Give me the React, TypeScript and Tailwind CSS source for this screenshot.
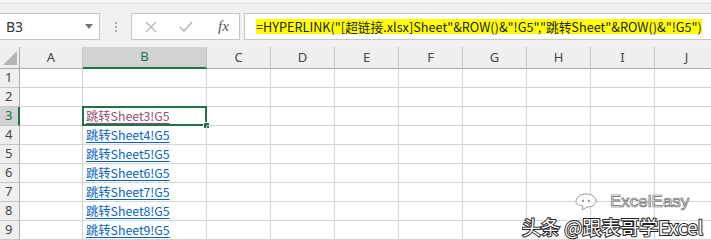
import React from 'react'

const cols = ['A', 'B', 'C', 'D', 'E', 'F', 'G', 'H', 'I', 'J']
const rows = [1, 2, 3, 4, 5, 6, 7, 8, 9]

const cellText = (r: number) => (r >= 3 ? `跳转Sheet${r}!G5` : '')

const App = () => {
  return (
    <div className="relative w-[711px] h-[240px] overflow-hidden bg-white font-['Noto_Sans','Noto_Sans_CJK_SC',sans-serif]">
      {/* formula bar */}
      <div className="h-[47px] bg-[#f1f1f1]">
        <div className="h-[4px] bg-[#f8f8f8] border-b border-[#dcdcdc]" />
        <div className="flex items-center mt-[9px] h-[27px]">
          <div className="w-[100px] h-full bg-white border border-l-0 border-[#c6c6c6] flex items-center justify-between pl-[6px] pr-[6px]">
            <span className="text-[14px] text-[#333]">B3</span>
            <span className="w-0 h-0 border-l-[4px] border-r-[4px] border-t-[5px] border-l-transparent border-r-transparent border-t-[#777]" />
          </div>
          <div className="w-[31px] flex flex-col items-center gap-[2px]">
            <span className="w-[2px] h-[2px] bg-[#aaa]" />
            <span className="w-[2px] h-[2px] bg-[#aaa]" />
            <span className="w-[2px] h-[2px] bg-[#aaa]" />
          </div>
          <div className="w-[109px] h-full bg-white border border-[#c6c6c6] flex items-center">
            <svg width="12" height="12" viewBox="0 0 12 12" className="ml-[13px]">
              <path d="M1 1 L11 11 M11 1 L1 11" stroke="#b4b4b4" strokeWidth="1.3" fill="none" />
            </svg>
            <svg width="14" height="12" viewBox="0 0 14 12" className="ml-[22px]">
              <path d="M1 6 L5 10 L13 1" stroke="#b4b4b4" strokeWidth="1.6" fill="none" />
            </svg>
            <span className="ml-[25px] text-[15px] italic text-[#555] font-['Liberation_Serif',serif]">fx</span>
          </div>
          <div className="ml-[4px] flex-1 h-full bg-white border border-r-0 border-[#c6c6c6] flex items-center pl-[11px]">
            <span className="bg-[#ffff00] text-[12.7px] leading-[15px] text-[#222] whitespace-nowrap font-['Noto_Sans_CJK_SC',sans-serif]">
              =HYPERLINK("[超链接.xlsx]Sheet"&amp;ROW()&amp;"!G5","跳转Sheet"&amp;ROW()&amp;"!G5")
            </span>
          </div>
        </div>
      </div>

      {/* sheet */}
      <div className="grid grid-cols-[20px_63px_124px_repeat(8,64px)] grid-rows-[22px_repeat(9,19px)]">
        <div className="bg-[#efefef] border-r border-b border-[#ababab] relative">
          <svg width="14" height="14" viewBox="0 0 14 14" className="absolute right-[2px] bottom-[3px]">
            <path d="M14 0 L14 14 L0 14 Z" fill="#b5b5b5" />
          </svg>
        </div>
        {cols.map((c) => (
          <div
            key={c}
            className={
              c === 'B'
                ? 'bg-[#d2d2d2] border-r border-[#c0c0c0] border-b-2 border-b-[#217346] flex items-center justify-center text-[13px] text-[#217346]'
                : 'bg-[#efefef] border-r border-[#c6c6c6] border-b border-b-[#ababab] flex items-center justify-center text-[13px] text-[#444]'
            }
          >
            {c}
          </div>
        ))}
        {rows.map((r) => (
          <React.Fragment key={r}>
            <div
              className={
                r === 3
                  ? 'bg-[#d2d2d2] border-r-2 border-r-[#217346] border-b border-b-[#c6c6c6] flex items-center pl-[5px] text-[13px] text-[#217346]'
                  : 'bg-[#efefef] border-r border-r-[#ababab] border-b border-b-[#c6c6c6] flex items-center pl-[5px] text-[13px] text-[#444]'
              }
            >
              {r}
            </div>
            {cols.map((c) => (
              <div key={c} className="relative border-r border-b border-[#d4d4d4] flex items-center">
                {c === 'B' && cellText(r) && (
                  <span
                    className={
                      r === 3
                        ? 'pl-[3px] text-[12.3px] leading-[16px] underline underline-offset-2 text-[#954f72] whitespace-nowrap font-["Noto_Sans_CJK_SC",sans-serif]'
                        : 'pl-[3px] text-[12.3px] leading-[16px] underline underline-offset-2 text-[#0563c1] whitespace-nowrap font-["Noto_Sans_CJK_SC",sans-serif]'
                    }
                  >
                    {cellText(r)}
                  </span>
                )}
                {c === 'B' && r === 3 && (
                  <>
                    <div className="absolute -left-[1px] -top-[1px] -right-[1px] -bottom-[1px] border-2 border-[#217346]" />
                    <div className="absolute -right-[4px] -bottom-[4px] w-[7px] h-[7px] bg-[#217346] border border-white" />
                  </>
                )}
              </div>
            ))}
          </React.Fragment>
        ))}
      </div>

      {/* watermark */}
      <div className="absolute left-[572px] top-[192px] flex items-center gap-[10px]">
        <svg width="28" height="20" viewBox="0 0 28 20">
          <path d="M4 10 C4 4 10 2 14 2 C20 2 24 5 24 9 C24 13 20 15 15 15 L10 18 L11 14 C6 13 4 12 4 10 Z" fill="white" stroke="#999" strokeWidth="1" />
          <circle cx="11" cy="9" r="1.2" fill="#999" />
          <circle cx="17" cy="9" r="1.2" fill="#999" />
        </svg>
        <span className="text-[17px] leading-[18px] text-white [-webkit-text-stroke:0.7px_#666] font-['Liberation_Sans',sans-serif]">ExcelEasy</span>
      </div>
      <div className="absolute left-[522px] top-[216px] text-[19px] leading-[22px] text-white whitespace-nowrap [-webkit-text-stroke:2px_#222] [paint-order:stroke_fill] font-['Noto_Sans_CJK_SC',sans-serif]">
        头条 @跟表哥学Excel
      </div>
    </div>
  )
}

export default App
